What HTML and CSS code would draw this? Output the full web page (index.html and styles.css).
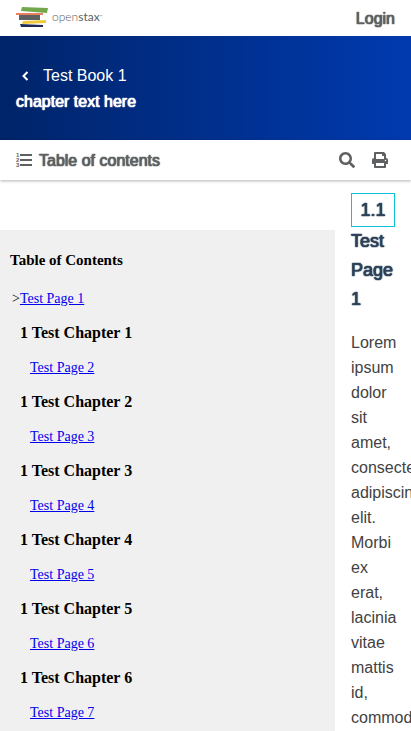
FILE: index.html
```html
<!DOCTYPE html>
<html lang="en">
<head>
<meta charset="utf-8">
<meta name="viewport" content="width=device-width, initial-scale=1">
<title>Test Book 1</title>
<link rel="stylesheet" href="styles.css">
</head>
<body>
<header class="topbar">
  <a class="logo" href="#">
    <svg class="logo-mark" viewBox="0 0 32 20" width="32" height="20" aria-hidden="true">
      <path fill="#72a84a" d="M6 0l26 1-1 5L5 4z"/>
      <path fill="#e8805f" d="M0 6h27v2H0z"/>
      <path fill="#5e6062" d="M3 8h21v5H3z"/>
      <path fill="#f0c93b" d="M7 14l23-1v3L6 17z"/>
      <path fill="#1d2a57" d="M4 17l23 1v2H5z"/>
    </svg>
    <span class="logo-text">open<b>stax</b><span class="logo-tm">™</span></span>
  </a>
  <a class="login strong" href="#">Login</a>
</header>
<div class="bookbar">
  <a class="book-link" href="#">
    <svg class="chevron" viewBox="0 0 19 16" width="19" height="16" aria-hidden="true"><path d="M11.5 4L7.5 8l4 4" fill="none" stroke="currentColor" stroke-width="2"/></svg>
    <span>Test Book 1</span>
  </a>
  <h1 class="chapter-title strong">chapter text here</h1>
</div>
<div class="toolbar">
  <button class="tool toc-button strong" type="button">
    <svg viewBox="0 0 16 16" width="16" height="16" aria-hidden="true" fill="currentColor">
      <path d="M4 2h12v2H4zM4 7h12v2H4zM4 12h12v2H4z"/>
      <g class="icon-digits"><text x="0" y="5">1</text><text x="0" y="10">2</text><text x="0" y="15">3</text></g>
    </svg>
    <span>Table of contents</span>
  </button>
  <div class="tools">
    <button class="tool" type="button" aria-label="Search">
      <svg viewBox="0 0 512 512" width="16" height="16" aria-hidden="true" fill="currentColor"><path d="M505 442.700L405.300 343c-4.500-4.500-10.600-7-17-7H372c27.600-35.300 44-79.700 44-128C416 93.100 322.900 0 208 0S0 93.100 0 208s93.100 208 208 208c48.300 0 92.700-16.400 128-44v16.300c0 6.400 2.500 12.500 7 17l99.700 99.700c9.400 9.400 24.600 9.400 33.900 0l28.300-28.300c9.400-9.400 9.400-24.600.1-34zM208 336c-70.700 0-128-57.200-128-128 0-70.700 57.200-128 128-128 70.700 0 128 57.200 128 128 0 70.700-57.200 128-128 128z"/></svg>
    </button>
    <button class="tool" type="button" aria-label="Print">
      <svg viewBox="0 0 512 512" width="16" height="16" aria-hidden="true" fill="currentColor"><path d="M448 192V77.250c0-8.490-3.370-16.620-9.370-22.630L393.370 9.370c-6-6-14.140-9.370-22.630-9.370H96C78.330 0 64 14.330 64 32v160c-35.350 0-64 28.650-64 64v112c0 8.840 7.160 16 16 16h48v96c0 17.670 14.330 32 32 32h320c17.670 0 32-14.330 32-32v-96h48c8.840 0 16-7.160 16-16V256c0-35.350-28.650-64-64-64zm-64 256H128v-96h256v96zm0-224H128V64h192v48c0 8.840 7.160 16 16 16h48v96zm48 72c-13.250 0-24-10.750-24-24 0-13.260 10.750-24 24-24s24 10.740 24 24c0 13.250-10.750 24-24 24z"/></svg>
    </button>
  </div>
</div>
<div class="content">
  <nav class="sidebar" aria-label="Table of Contents">
    <h2 class="sidebar-title">Table of Contents</h2>
    <p class="page current">&gt;<a href="#">Test Page 1</a></p>
    <h3 class="chapter">1 Test Chapter 1</h3>
    <p class="page"><a href="#">Test Page 2</a></p>
    <h3 class="chapter">1 Test Chapter 2</h3>
    <p class="page"><a href="#">Test Page 3</a></p>
    <h3 class="chapter">1 Test Chapter 3</h3>
    <p class="page"><a href="#">Test Page 4</a></p>
    <h3 class="chapter">1 Test Chapter 4</h3>
    <p class="page"><a href="#">Test Page 5</a></p>
    <h3 class="chapter">1 Test Chapter 5</h3>
    <p class="page"><a href="#">Test Page 6</a></p>
    <h3 class="chapter">1 Test Chapter 6</h3>
    <p class="page"><a href="#">Test Page 7</a></p>
  </nav>
  <main class="main">
    <h2 class="page-title strong"><span class="page-number">1.1</span> Test Page 1</h2>
    <p class="text">Lorem ipsum dolor sit amet, consectetur adipiscing elit. Morbi ex erat, lacinia vitae mattis id, commodo</p>
  </main>
</div>
</body>
</html>
```
FILE: styles.css
```css
* {
  box-sizing: border-box;
}

body {
  margin: 0;
  min-height: 100vh;
  display: flex;
  flex-direction: column;
  background: #fff;
  color: #424242;
  font: 16px/25px "Liberation Sans", Helvetica, Arial, sans-serif;
}

h1, h2, h3, p {
  margin: 0;
}

/* Regular letterforms, thickened without changing their widths */
.strong {
  font-weight: 400;
  text-shadow: 0 0 1px currentColor, 0 0 1px currentColor, 0 0 1px currentColor;
}

.topbar {
  height: 36px;
  padding: 0 16px;
  display: flex;
  align-items: center;
  justify-content: space-between;
}

.logo {
  display: flex;
  align-items: center;
  gap: 4px;
  color: #5e6062;
  text-decoration: none;
}

.logo-text {
  font: 300 12px/16px Lato, sans-serif;
  padding-bottom: 3px;
}

.logo-mark {
  margin-bottom: 2px;
}

.logo-tm {
  font-size: 4px;
  vertical-align: 3px;
}

.login {
  color: #5e6062;
  text-decoration: none;
}

.bookbar {
  height: 104px;
  padding: 27px 16px 0;
  color: #fff;
  line-height: 26px;
  background: linear-gradient(to right, #002469, #003aaf);
}

.book-link {
  display: flex;
  align-items: center;
  gap: 8px;
  color: inherit;
  text-decoration: none;
}

.chapter-title {
  font-size: 16px;
}

.toolbar {
  position: relative;
  height: 40px;
  padding: 0 23px 0 16px;
  display: flex;
  align-items: center;
  justify-content: space-between;
  background: #fff;
  box-shadow: 0 1px 3px rgba(0, 0, 0, 0.3);
}

.tool {
  display: flex;
  align-items: center;
  gap: 7px;
  padding: 0;
  border: 0;
  background: none;
  color: #5e6062;
  font-family: inherit;
  font-size: 16px;
  line-height: 25px;
}

.icon-digits {
  font: bold 6px "Liberation Sans", sans-serif;
  text-shadow: none;
}

.tools {
  display: flex;
  gap: 17px;
}

.content {
  flex: 1;
  display: flex;
}

.sidebar {
  flex: none;
  width: 335px;
  margin-top: 50px;
  padding: 20px 10px 0;
  background: #f0f0f0;
  color: #000;
  font-family: "Liberation Serif", "Times New Roman", serif;
}

.sidebar-title {
  margin-bottom: 21px;
  font-size: 15px;
  line-height: 20px;
}

.page {
  margin-bottom: 17px;
  padding-left: 20px;
  font-size: 14px;
  line-height: 16px;
}

.page.current {
  padding-left: 2px;
}

.page a {
  color: #00e;
}

.chapter {
  margin-bottom: 18px;
  padding-left: 10px;
  font-size: 16px;
  line-height: 18px;
}

.main {
  flex: 1;
  min-width: 0;
  padding: 13px 16px 0;
  overflow: hidden;
}

.page-title {
  margin-bottom: 16px;
  color: #2d4159;
  font-size: 18px;
  line-height: 29px;
}

.page-number {
  display: block;
  border: 1px solid #0fc0dc;
  text-align: center;
  line-height: 32px;
}
```
